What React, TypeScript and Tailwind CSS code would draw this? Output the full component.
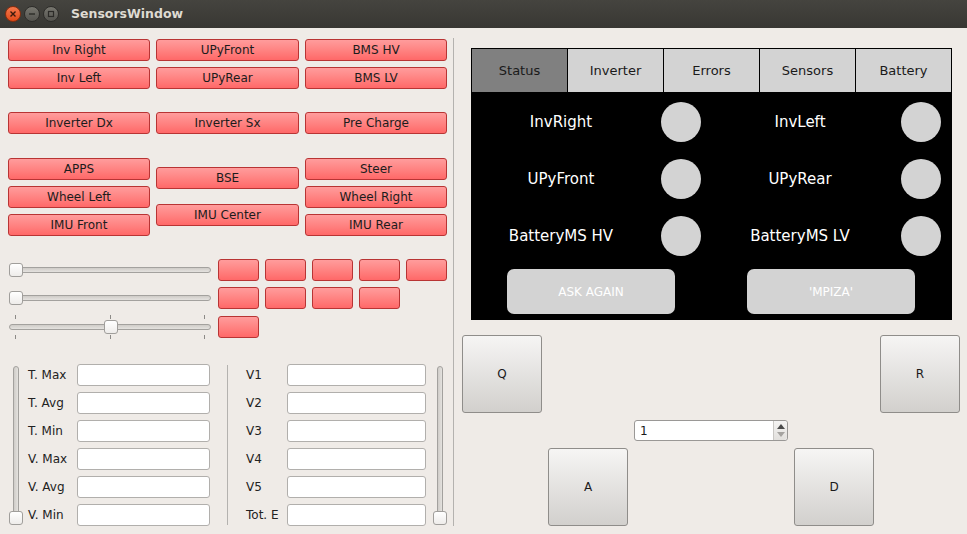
import React from "react";

const FONT = { fontFamily: "'DejaVu Sans', 'Liberation Sans', sans-serif" };

function RedBtn({ label, w }: { label?: string; w: string }) {
  return (
    <div
      className={`${w} h-[22px] shrink-0 rounded-[3px] border border-[#b83434] bg-linear-to-b from-[#ff9c9c] to-[#ff6868] flex items-center justify-center text-[12px] text-[#1c1c1c] leading-none`}
    >
      {label}
    </div>
  );
}

function HSlider({ pos, ticks }: { pos: number; ticks?: boolean }) {
  return (
    <div className="relative w-[202px] h-[14px]">
      <div className="absolute left-0 right-0 top-[4px] h-[6px] rounded-full border border-[#a3a19e] bg-linear-to-b from-[#cfccc8] to-[#e4e2df]" />
      <div
        className="absolute top-0 w-[14px] h-[14px] rounded-[3px] border border-[#a09e9b] bg-linear-to-b from-[#ffffff] to-[#eeecea]"
        style={{ left: pos }}
      />
      {ticks && (
        <>
          <div className="absolute left-[6px] top-[-5px] w-px h-[4px] bg-[#8c8a87]" />
          <div className="absolute left-[101px] top-[-5px] w-px h-[4px] bg-[#8c8a87]" />
          <div className="absolute left-[195px] top-[-5px] w-px h-[4px] bg-[#8c8a87]" />
          <div className="absolute left-[6px] top-[15px] w-px h-[4px] bg-[#8c8a87]" />
          <div className="absolute left-[101px] top-[15px] w-px h-[4px] bg-[#8c8a87]" />
          <div className="absolute left-[195px] top-[15px] w-px h-[4px] bg-[#8c8a87]" />
        </>
      )}
    </div>
  );
}

function VSlider() {
  return (
    <div className="relative w-[14px] h-[162px] shrink-0">
      <div className="absolute left-[4px] top-[2px] bottom-[4px] w-[6px] rounded-full border border-[#a3a19e] bg-linear-to-r from-[#cfccc8] to-[#e4e2df]" />
      <div className="absolute left-0 bottom-[1px] w-[14px] h-[14px] rounded-[3px] border border-[#a09e9b] bg-linear-to-b from-[#ffffff] to-[#eeecea]" />
    </div>
  );
}

function Field({ label, lw, iw }: { label: string; lw: string; iw: string }) {
  return (
    <div className="flex items-center h-[22px]">
      <div className={`${lw} text-[12px] text-[#222222]`}>{label}</div>
      <div className={`${iw} h-[22px] rounded-[3px] border border-[#b1afac] bg-white`} />
    </div>
  );
}

function GreyBtn({ label }: { label: string }) {
  return (
    <div className="w-[80px] h-[78px] rounded-[3px] border border-[#8f8d8a] bg-linear-to-b from-[#f6f5f4] to-[#d2d0cd] flex items-center justify-center text-[12px] text-[#1a1a1a]">
      {label}
    </div>
  );
}

function StatusRow({ a, b }: { a: string; b: string }) {
  return (
    <div className="flex items-center h-[40px]">
      <div className="ml-[19px] w-[140px] text-center text-[15px] text-white">{a}</div>
      <div className="ml-[30px] w-[40px] h-[40px] rounded-full bg-[#d3d3d3]" />
      <div className="ml-[29px] w-[140px] text-center text-[15px] text-white">{b}</div>
      <div className="ml-[31px] w-[40px] h-[40px] rounded-full bg-[#d3d3d3]" />
    </div>
  );
}

export default function App() {
  const tabs = ["Status", "Inverter", "Errors", "Sensors", "Battery"];
  return (
    <div className="w-[967px] h-[534px] overflow-hidden bg-[#efebe7] flex flex-col" style={FONT}>
      {/* Title bar */}
      <div className="h-[28px] shrink-0 bg-linear-to-b from-[#45443f] to-[#383733] flex items-center">
        <div className="ml-[5px] w-[16px] h-[16px] rounded-full bg-linear-to-b from-[#f6774a] to-[#df4a16] border border-[#8a2d0e] flex items-center justify-center">
          <svg width="8" height="8" viewBox="0 0 8 8">
            <path d="M1.5 1.5 L6.5 6.5 M6.5 1.5 L1.5 6.5" stroke="#3a1a0c" strokeWidth="1.4" />
          </svg>
        </div>
        <div className="ml-[3px] w-[16px] h-[16px] rounded-full bg-linear-to-b from-[#77766f] to-[#55544f] border border-[#2e2d2a] flex items-center justify-center">
          <svg width="8" height="8" viewBox="0 0 8 8">
            <path d="M1 4 L7 4" stroke="#2c2b28" strokeWidth="1.4" />
          </svg>
        </div>
        <div className="ml-[3px] w-[16px] h-[16px] rounded-full bg-linear-to-b from-[#77766f] to-[#55544f] border border-[#2e2d2a] flex items-center justify-center">
          <svg width="8" height="8" viewBox="0 0 8 8">
            <rect x="1.5" y="1.5" width="5" height="5" fill="none" stroke="#2c2b28" strokeWidth="1.2" />
          </svg>
        </div>
        <div className="ml-[12px] text-[12.5px] font-bold text-[#dfdbd2]">SensorsWindow</div>
      </div>

      <div className="flex flex-1">
        {/* Left panel */}
        <div className="w-[453px] shrink-0 pl-[8px] pt-[11px] flex flex-col">
          <div className="flex gap-[6px]">
            <RedBtn label="Inv Right" w="w-[142px]" />
            <RedBtn label="UPyFront" w="w-[143px]" />
            <RedBtn label="BMS HV" w="w-[142px]" />
          </div>
          <div className="flex gap-[6px] mt-[6px]">
            <RedBtn label="Inv Left" w="w-[142px]" />
            <RedBtn label="UPyRear" w="w-[143px]" />
            <RedBtn label="BMS LV" w="w-[142px]" />
          </div>
          <div className="flex gap-[6px] mt-[23px]">
            <RedBtn label="Inverter Dx" w="w-[142px]" />
            <RedBtn label="Inverter Sx" w="w-[143px]" />
            <RedBtn label="Pre Charge" w="w-[142px]" />
          </div>
          <div className="flex gap-[6px] mt-[24px] items-start">
            <div className="flex flex-col gap-[6px]">
              <RedBtn label="APPS" w="w-[142px]" />
              <RedBtn label="Wheel Left" w="w-[142px]" />
              <RedBtn label="IMU Front" w="w-[142px]" />
            </div>
            <div className="flex flex-col gap-[15px] pt-[9px]">
              <RedBtn label="BSE" w="w-[143px]" />
              <RedBtn label="IMU Center" w="w-[143px]" />
            </div>
            <div className="flex flex-col gap-[6px]">
              <RedBtn label="Steer" w="w-[142px]" />
              <RedBtn label="Wheel Right" w="w-[142px]" />
              <RedBtn label="IMU Rear" w="w-[142px]" />
            </div>
          </div>

          {/* sliders */}
          <div className="flex items-center mt-[23px]">
            <div className="ml-[1px]"><HSlider pos={0} /></div>
            <div className="ml-[7px] flex gap-[6px]">
              <RedBtn w="w-[41px]" />
              <RedBtn w="w-[41px]" />
              <RedBtn w="w-[41px]" />
              <RedBtn w="w-[41px]" />
              <RedBtn w="w-[41px]" />
            </div>
          </div>
          <div className="flex items-center mt-[6px]">
            <div className="ml-[1px]"><HSlider pos={0} /></div>
            <div className="ml-[7px] flex gap-[6px]">
              <RedBtn w="w-[41px]" />
              <RedBtn w="w-[41px]" />
              <RedBtn w="w-[41px]" />
              <RedBtn w="w-[41px]" />
            </div>
          </div>
          <div className="flex items-center mt-[7px]">
            <div className="ml-[1px]"><HSlider pos={95} ticks /></div>
            <div className="ml-[7px] flex gap-[6px]">
              <RedBtn w="w-[41px]" />
            </div>
          </div>

          {/* form */}
          <div className="flex mt-[26px]">
            <div className="ml-[1px]"><VSlider /></div>
            <div className="ml-[5px] flex flex-col gap-[6px]">
              {["T. Max", "T. Avg", "T. Min", "V. Max", "V. Avg", "V. Min"].map((l) => (
                <Field key={l} label={l} lw="w-[49px]" iw="w-[133px]" />
              ))}
            </div>
            <div className="ml-[17px] mt-[1px] w-px h-[160px] bg-[#b4b2af]" />
            <div className="ml-[18px] flex flex-col gap-[6px]">
              {["V1", "V2", "V3", "V4", "V5", "Tot. E"].map((l) => (
                <Field key={l} label={l} lw="w-[41px]" iw="w-[139px]" />
              ))}
            </div>
            <div className="ml-[7px]"><VSlider /></div>
          </div>
        </div>

        {/* splitter */}
        <div className="w-px bg-[#b4b2af] mt-[10px] mb-[8px]" />

        {/* Right panel */}
        <div className="flex-1 flex flex-col pt-[20px]">
          <div className="ml-[17px] w-[481px] border border-black bg-black flex flex-col">
            <div className="flex h-[43px]">
              {tabs.map((t, i) => (
                <div
                  key={t}
                  className={`flex-1 flex items-center justify-center text-[13px] text-[#1a1a1a] ${
                    i === 0 ? "bg-[#808080]" : "bg-[#d3d3d3] border-l border-black"
                  }`}
                >
                  {t}
                </div>
              ))}
            </div>
            <div className="h-[227px] flex flex-col pt-[10px]">
              <div className="flex flex-col gap-[17px]">
                <StatusRow a="InvRight" b="InvLeft" />
                <StatusRow a="UPyFront" b="UPyRear" />
                <StatusRow a="BatteryMS HV" b="BatteryMS LV" />
              </div>
              <div className="flex mt-[13px]">
                <div className="ml-[35px] w-[168px] h-[45px] rounded-[7px] bg-[#d3d3d3] flex items-center justify-center text-[12px] text-white">
                  ASK AGAIN
                </div>
                <div className="ml-[72px] w-[168px] h-[45px] rounded-[7px] bg-[#d3d3d3] flex items-center justify-center text-[12px] text-white">
                  'MPIZA'
                </div>
              </div>
            </div>
          </div>

          <div className="flex mt-[15px]">
            <div className="ml-[8px]"><GreyBtn label="Q" /></div>
            <div className="ml-auto mr-[7px]"><GreyBtn label="R" /></div>
          </div>
          <div className="flex mt-[7px]">
            <div className="ml-[180px] w-[154px] h-[21px] rounded-[3px] border border-[#9a9896] bg-white flex">
              <div className="flex-1 flex items-center pl-[5px] text-[12px] text-[#1a1a1a]">1</div>
              <div className="w-[14px] border-l border-[#c9c7c4] bg-linear-to-b from-[#f4f3f2] to-[#e2e0dd] flex flex-col items-center justify-center gap-[3px] rounded-r-[3px]">
                <svg width="8" height="5" viewBox="0 0 8 5"><path d="M0 5 L4 0 L8 5 Z" fill="#4a4a4a" /></svg>
                <svg width="8" height="5" viewBox="0 0 8 5"><path d="M0 0 L4 5 L8 0 Z" fill="#a5a3a0" /></svg>
              </div>
            </div>
          </div>
          <div className="flex mt-[7px]">
            <div className="ml-[94px]"><GreyBtn label="A" /></div>
            <div className="ml-[166px]"><GreyBtn label="D" /></div>
          </div>
        </div>
      </div>
    </div>
  );
}
